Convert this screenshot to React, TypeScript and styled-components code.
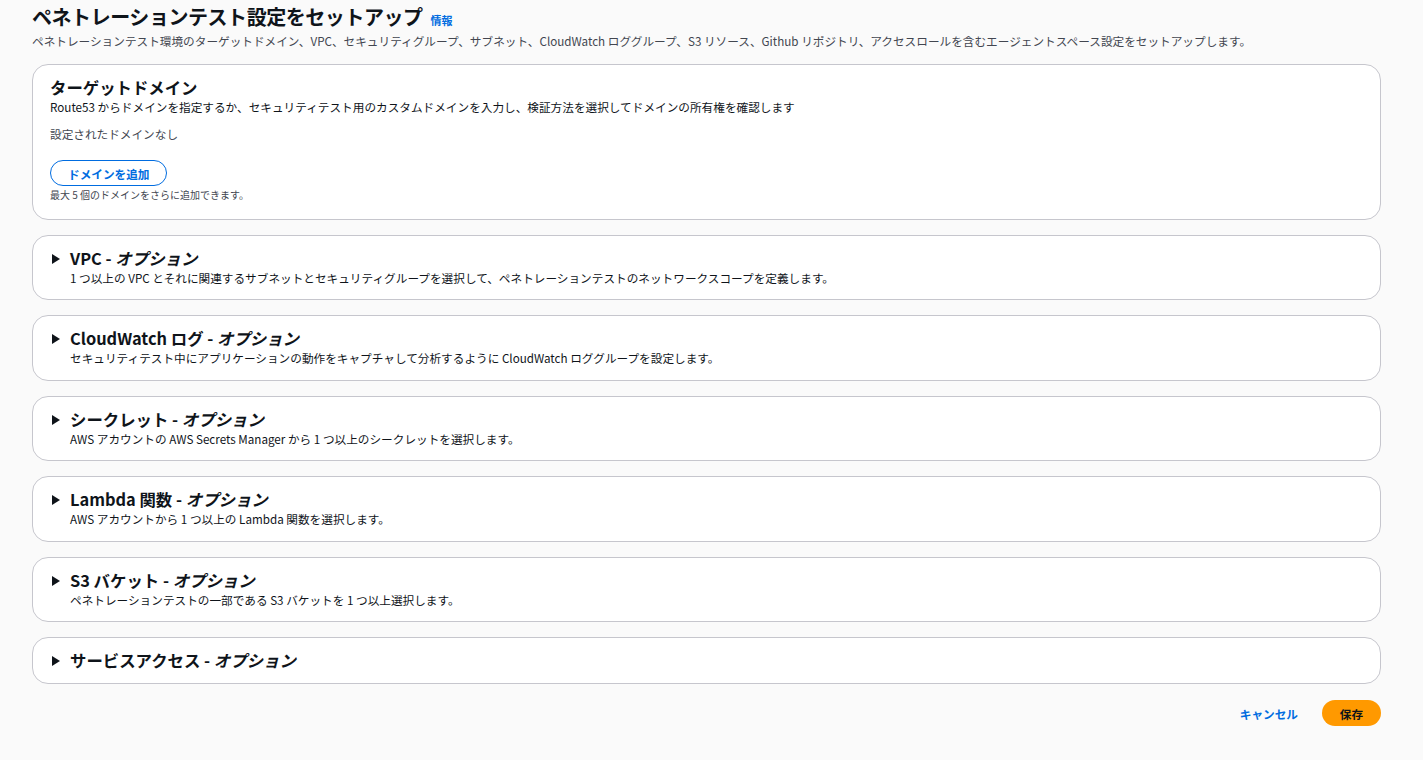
import React from "react";
import styled, { createGlobalStyle } from "styled-components";

const Global = createGlobalStyle`
  html, body { margin: 0; padding: 0; background: #fafafa; }
  body { font-family: "Noto Sans CJK JP", "Noto Sans", sans-serif; color: #0f141a; }
  * { box-sizing: border-box; }
`;

const Page = styled.div`
  padding: 3px 42px 20px 32px;
  display: flex;
  flex-direction: column;
`;

const Header = styled.header`
  display: flex;
  flex-direction: column;
  margin-bottom: 13px;
`;

const TitleRow = styled.div`
  display: flex;
  align-items: baseline;
  gap: 8px;
`;

const Title = styled.h1`
  margin: 0;
  font-size: 20px;
  line-height: 28px;
  font-weight: 700;
  letter-spacing: -0.45px;
`;

const InfoLink = styled.a`
  font-size: 11px;
  font-weight: 700;
  color: #006ce0;
  text-decoration: none;
`;

const Subtitle = styled.p`
  margin: 0;
  font-size: 11.65px;
  line-height: 20px;
  color: #424650;
`;

const List = styled.div`
  display: flex;
  flex-direction: column;
  gap: 15px;
`;

const Card = styled.section<{ $pad?: string }>`
  background: #fff;
  border: 1px solid #c6c6cd;
  border-radius: 16px;
  padding: ${(p) => p.$pad || "11px 18px 12.4px 19px"};
`;

const CardTitle = styled.h2`
  margin: 0;
  font-size: 16.4px;
  line-height: 22px;
  font-weight: 700;
`;

const Desc = styled.p`
  margin: 0;
  font-size: 11.65px;
  line-height: 18px;
  color: #0f141a;
`;

const Empty = styled.p`
  margin: 9px 0 0;
  font-size: 11.65px;
  line-height: 18px;
  color: #424650;
`;

const OutlineButton = styled.button`
  margin-top: 17px;
  align-self: flex-start;
  font-family: inherit;
  font-size: 11.65px;
  font-weight: 700;
  color: #006ce0;
  background: #fff;
  border: 1.5px solid #006ce0;
  border-radius: 16px;
  height: 26px;
  padding: 0 17px;
  cursor: pointer;
`;

const Hint = styled.p`
  margin: 2px 0 0;
  font-size: 10px;
  line-height: 14px;
  color: #424650;
`;

const Column = styled.div`
  display: flex;
  flex-direction: column;
`;

const ExpandHeader = styled.div`
  display: flex;
  align-items: flex-start;
  gap: 10px;
`;

const Caret = styled.span`
  display: inline-block;
  width: 0;
  height: 0;
  margin-top: 7px;
  border-top: 5px solid transparent;
  border-bottom: 5px solid transparent;
  border-left: 8px solid #0f141a;
  flex: none;
`;

const Italic = styled.i`
  font-style: italic;
`;

const Footer = styled.div`
  display: flex;
  justify-content: flex-end;
  align-items: center;
  gap: 22px;
  margin-top: 16px;
`;

const LinkButton = styled.button`
  font-family: inherit;
  font-size: 11.65px;
  font-weight: 700;
  color: #006ce0;
  background: none;
  border: none;
  padding: 0 2px;
  cursor: pointer;
`;

const PrimaryButton = styled.button`
  font-family: inherit;
  font-size: 11.65px;
  font-weight: 700;
  color: #0f141a;
  background: #ff9900;
  border: none;
  border-radius: 16px;
  height: 26px;
  width: 59px;
  cursor: pointer;
`;

const sections: { title: string; desc?: string }[] = [
  { title: "VPC", desc: "1 つ以上の VPC とそれに関連するサブネットとセキュリティグループを選択して、ペネトレーションテストのネットワークスコープを定義します。" },
  { title: "CloudWatch ログ", desc: "セキュリティテスト中にアプリケーションの動作をキャプチャして分析するように CloudWatch ロググループを設定します。" },
  { title: "シークレット", desc: "AWS アカウントの AWS Secrets Manager から 1 つ以上のシークレットを選択します。" },
  { title: "Lambda 関数", desc: "AWS アカウントから 1 つ以上の Lambda 関数を選択します。" },
  { title: "S3 バケット", desc: "ペネトレーションテストの一部である S3 バケットを 1 つ以上選択します。" },
  { title: "サービスアクセス" },
];

export default function App() {
  return (
    <>
      <Global />
      <Page>
        <Header>
          <TitleRow>
            <Title>ペネトレーションテスト設定をセットアップ</Title>
            <InfoLink href="#">情報</InfoLink>
          </TitleRow>
          <Subtitle>
            ペネトレーションテスト環境のターゲットドメイン、VPC、セキュリティグループ、サブネット、CloudWatch ロググループ、S3 リソース、Github リポジトリ、アクセスロールを含むエージェントスペース設定をセットアップします。
          </Subtitle>
        </Header>
        <List>
          <Card $pad="11px 17px 17px">
            <Column>
              <CardTitle>ターゲットドメイン</CardTitle>
              <Desc>Route53 からドメインを指定するか、セキュリティテスト用のカスタムドメインを入力し、検証方法を選択してドメインの所有権を確認します</Desc>
              <Empty>設定されたドメインなし</Empty>
              <OutlineButton>ドメインを追加</OutlineButton>
              <Hint>最大 5 個のドメインをさらに追加できます。</Hint>
            </Column>
          </Card>
          {sections.map((s) => (
            <Card key={s.title}>
              <ExpandHeader>
                <Caret />
                <Column>
                  <CardTitle>
                    {s.title} - <Italic>オプション</Italic>
                  </CardTitle>
                  {s.desc && <Desc>{s.desc}</Desc>}
                </Column>
              </ExpandHeader>
            </Card>
          ))}
        </List>
        <Footer>
          <LinkButton>キャンセル</LinkButton>
          <PrimaryButton>保存</PrimaryButton>
        </Footer>
      </Page>
    </>
  );
}
